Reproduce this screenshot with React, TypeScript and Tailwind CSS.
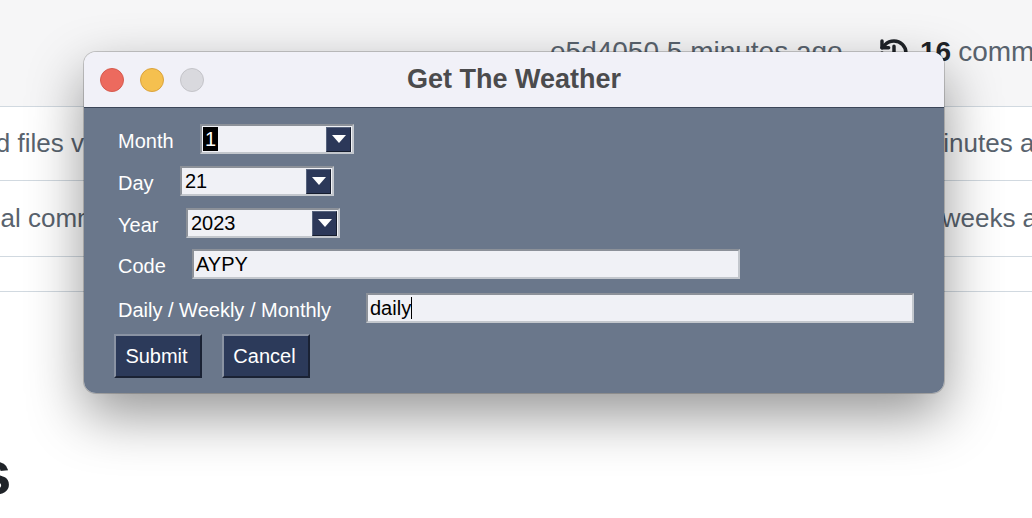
import { History } from "lucide-react";

const LABEL = "pt-[4px] text-[20px] leading-none text-white";

function Combo({ value, highlight, width }: { value: string; highlight?: boolean; width: number }) {
  return (
    <div
      className="flex h-[30px] items-center border-2 border-t-[#8c9199] border-l-[#8c9199] border-b-[#c3c7cd] border-r-[#c3c7cd] bg-[#f0f1f6]"
      style={{ width }}
    >
      <div className="flex h-full flex-1 items-center pl-px">
        {highlight ? (
          <span className="flex h-[24px] items-center bg-black px-[2px] text-[20px] leading-none text-white">{value}</span>
        ) : (
          <span className="pl-[2px] text-[20px] leading-none text-black">{value}</span>
        )}
      </div>
      <div className="mr-px flex h-[25px] w-[25px] items-center justify-center border border-t-[#56637d] border-l-[#56637d] border-b-[#161d2e] border-r-[#161d2e] bg-[#2c3859]">
        <svg width="14" height="8" viewBox="0 0 14 8">
          <polygon points="0,0 14,0 7,8" fill="#ffffff" />
        </svg>
      </div>
    </div>
  );
}

function Entry({ value, caret }: { value: string; caret?: boolean }) {
  return (
    <div className="flex h-[30px] w-[548px] items-center border-2 border-t-[#8c9199] border-l-[#8c9199] border-b-[#c3c7cd] border-r-[#c3c7cd] bg-[#f0f1f6] pl-[2px]">
      <span className="text-[20px] leading-none text-black">{value}</span>
      {caret && <span className="h-[22px] w-px bg-black" />}
    </div>
  );
}

function Button({ label }: { label: string }) {
  return (
    <button className="flex h-[44px] w-[88px] items-center justify-center border-2 border-t-[#8a93a3] border-l-[#8a93a3] border-b-[#1a2234] border-r-[#1a2234] bg-[#2c3a5a] pr-[3px] text-[20px] leading-none text-white">
      {label}
    </button>
  );
}

export default function App() {
  return (
    <div className="relative h-[518px] w-[1032px] overflow-hidden bg-white font-['Liberation_Sans',Arial,sans-serif]">
      {/* background page */}
      <div className="flex h-[107px] items-start whitespace-nowrap border-b border-[#d1d9e0] bg-[#f6f6f7] pl-[550px] pt-[35px] text-[28px] leading-[34px] text-[#59636e]">
        <span className="w-[293px] shrink-0">e5d4050 5 minutes ago</span>
        <History size={32} strokeWidth={2.6} className="ml-[35px] mt-[2px] shrink-0 text-[#1f2328]" />
        <span className="ml-[10px] font-bold text-[#1f2328]">16</span>
        <span className="ml-[7px]">commits</span>
      </div>
      <div className="flex h-[74px] items-center justify-between whitespace-nowrap border-b border-[#d1d9e0] text-[26px] text-[#59636e]">
        <span className="ml-[-36px]">Add files via upload</span>
        <span className="w-[132px] shrink-0">5 minutes ago</span>
      </div>
      <div className="flex h-[76px] items-center justify-between whitespace-nowrap border-b border-[#d1d9e0] text-[26px] text-[#59636e]">
        <span className="ml-[-40px]">Initial commit</span>
        <span className="w-[112px] shrink-0">2 weeks ago</span>
      </div>
      <div className="h-[35px] border-b border-[#d1d9e0]" />
      <div className="ml-[-23px] mt-[150px] text-[62px] font-bold leading-none text-[#1f2328]">s</div>

      {/* dialog window */}
      <div className="absolute left-[84px] top-[52px] w-[860px] overflow-hidden rounded-[12px] shadow-[0_22px_55px_rgba(0,0,0,0.42),0_0_0_1px_rgba(0,0,0,0.18)]">
        <div className="relative flex h-[56px] items-center justify-center border-b border-[#3b4659] bg-[#f1f1f8]">
          <div className="absolute left-[16px] top-[16px] flex gap-[16px]">
            <span className="h-[24px] w-[24px] rounded-full border border-[#d65a4e] bg-[#ec6a5e]" />
            <span className="h-[24px] w-[24px] rounded-full border border-[#dba33c] bg-[#f5c04f]" />
            <span className="h-[24px] w-[24px] rounded-full border border-[#c4c4c9] bg-[#d9d9de]" />
          </div>
          <span className="text-[27px] font-bold text-[#4b4b4d]">Get The Weather</span>
        </div>
        <div className="flex h-[285px] flex-col bg-[#6a778b] pl-[30px] pt-[16px]">
          <div className="flex items-center pl-[4px]">
            <span className={`w-[82px] ${LABEL}`}>Month</span>
            <Combo value="1" highlight width={154} />
          </div>
          <div className="mt-[12px] flex items-center pl-[4px]">
            <span className={`w-[62px] ${LABEL}`}>Day</span>
            <Combo value="21" width={154} />
          </div>
          <div className="mt-[12px] flex items-center pl-[4px]">
            <span className={`w-[68px] ${LABEL}`}>Year</span>
            <Combo value="2023" width={154} />
          </div>
          <div className="mt-[11px] flex items-center pl-[4px]">
            <span className={`w-[74px] ${LABEL}`}>Code</span>
            <Entry value="AYPY" />
          </div>
          <div className="mt-[14px] flex items-center pl-[4px]">
            <span className={`w-[248px] ${LABEL}`}>Daily / Weekly / Monthly</span>
            <Entry value="daily" caret />
          </div>
          <div className="mt-[11px] flex gap-[20px]">
            <Button label="Submit" />
            <Button label="Cancel" />
          </div>
        </div>
      </div>
    </div>
  );
}
